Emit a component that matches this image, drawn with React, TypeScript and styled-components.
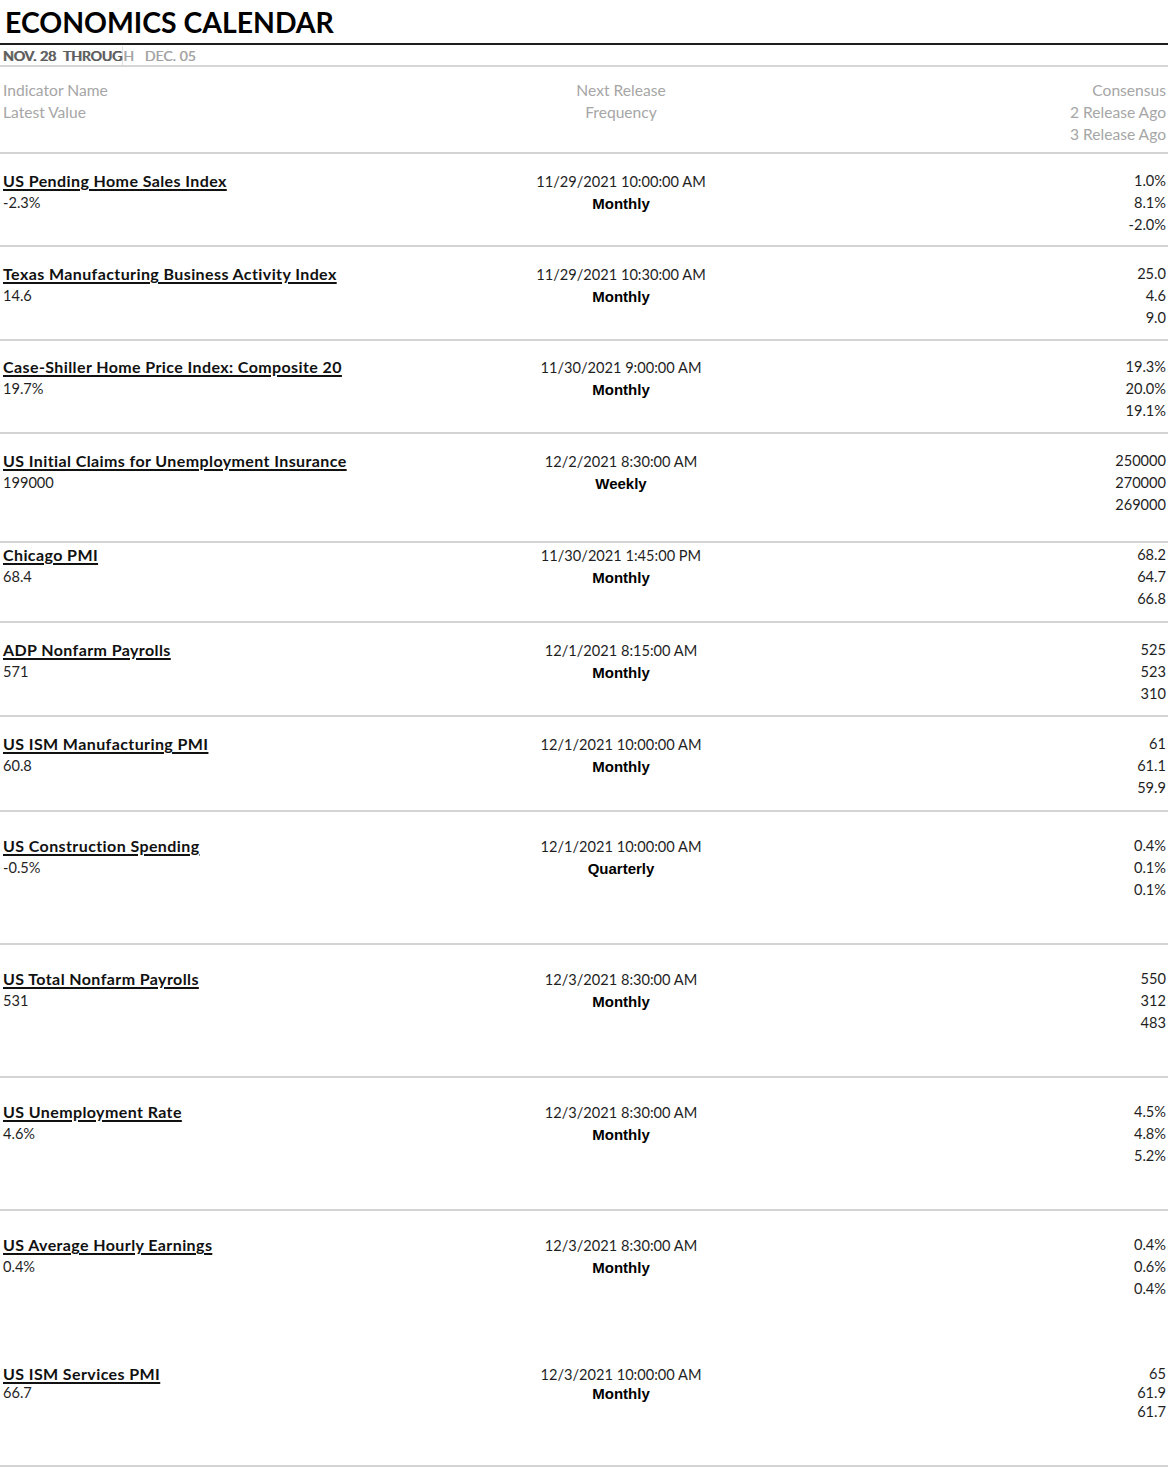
import * as React from 'react';
import styled, { createGlobalStyle } from 'styled-components';

const GlobalStyle = createGlobalStyle`
  html, body {
    margin: 0;
    padding: 0;
    background: #fff;
  }
  body {
    font-family: Lato, "Open Sans", sans-serif;
    color: #1a1a1a;
  }
`;

interface Release {
  name: string;
  latest: string;
  date: string;
  freq: string;
  values: string[];
  height: number;
  padTop: number;
  tight?: boolean;
  noRule?: boolean;
}

const releases: Release[] = [
  { name: 'US Pending Home Sales Index', latest: '-2.3%', date: '11/29/2021 10:00:00 AM', freq: 'Monthly', values: ['1.0%', '8.1%', '-2.0%'], height: 93, padTop: 16 },
  { name: 'Texas Manufacturing Business Activity Index', latest: '14.6', date: '11/29/2021 10:30:00 AM', freq: 'Monthly', values: ['25.0', '4.6', '9.0'], height: 94, padTop: 16 },
  { name: 'Case-Shiller Home Price Index: Composite 20', latest: '19.7%', date: '11/30/2021 9:00:00 AM', freq: 'Monthly', values: ['19.3%', '20.0%', '19.1%'], height: 93, padTop: 15 },
  { name: 'US Initial Claims for Unemployment Insurance', latest: '199000', date: '12/2/2021 8:30:00 AM', freq: 'Weekly', values: ['250000', '270000', '269000'], height: 109, padTop: 16 },
  { name: 'Chicago PMI', latest: '68.4', date: '11/30/2021 1:45:00 PM', freq: 'Monthly', values: ['68.2', '64.7', '66.8'], height: 80, padTop: 1 },
  { name: 'ADP Nonfarm Payrolls', latest: '571', date: '12/1/2021 8:15:00 AM', freq: 'Monthly', values: ['525', '523', '310'], height: 94, padTop: 16 },
  { name: 'US ISM Manufacturing PMI', latest: '60.8', date: '12/1/2021 10:00:00 AM', freq: 'Monthly', values: ['61', '61.1', '59.9'], height: 95, padTop: 16 },
  { name: 'US Construction Spending', latest: '-0.5%', date: '12/1/2021 10:00:00 AM', freq: 'Quarterly', values: ['0.4%', '0.1%', '0.1%'], height: 133, padTop: 23 },
  { name: 'US Total Nonfarm Payrolls', latest: '531', date: '12/3/2021 8:30:00 AM', freq: 'Monthly', values: ['550', '312', '483'], height: 133, padTop: 23 },
  { name: 'US Unemployment Rate', latest: '4.6%', date: '12/3/2021 8:30:00 AM', freq: 'Monthly', values: ['4.5%', '4.8%', '5.2%'], height: 133, padTop: 23 },
  { name: 'US Average Hourly Earnings', latest: '0.4%', date: '12/3/2021 8:30:00 AM', freq: 'Monthly', values: ['0.4%', '0.6%', '0.4%'], height: 131, padTop: 23, noRule: true },
  { name: 'US ISM Services PMI', latest: '66.7', date: '12/3/2021 10:00:00 AM', freq: 'Monthly', values: ['65', '61.9', '61.7'], height: 125, padTop: 22, tight: true },
];

const Page = styled.div`
  width: 1168px;
`;

const TitleBar = styled.div`
  height: 45px;
  box-sizing: border-box;
  border-bottom: 2px solid #1e1e1e;
  padding-left: 5px;
  display: flex;
  align-items: center;
`;

const Title = styled.h1`
  margin: 0;
  font-family: Lato, sans-serif;
  font-weight: 700;
  font-size: 28.4px;
  color: #000;
  line-height: 1;
  padding-top: 2px;
`;

const RangeBar = styled.div`
  height: 22px;
  box-sizing: border-box;
  border-bottom: 2px solid #d6d6d6;
  padding: 1px 0 0 3px;
  display: flex;
  align-items: center;
`;

const RangePart = styled.span<{ $dark?: boolean }>`
  display: flex;
  align-items: center;
  align-self: stretch;
  font-family: Lato, sans-serif;
  font-size: 14px;
  white-space: pre;
  color: ${p => (p.$dark ? '#5c5c5c' : '#a3a3a3')};
  text-shadow: ${p => (p.$dark ? '0.7px 0 0 #6a6a6a, -0.4px 0 0 #9a9a9a' : '0.4px 0 0 #b5b5b5')};
  border-right: ${p => (p.$dark ? '1px solid #e2e2e2' : 'none')};
`;

const Row = styled.div<{ $height: number; $padTop: number; $noRule?: boolean; $tight?: boolean }>`
  display: grid;
  grid-template-columns: 521px 200px 1fr;
  box-sizing: border-box;
  height: ${p => p.$height}px;
  padding-top: ${p => p.$padTop}px;
  border-bottom: 2px solid ${p => (p.$noRule ? 'transparent' : '#d4d4d4')};
  line-height: ${p => (p.$tight ? 19 : 22)}px;
  font-size: 14.6px;
`;

const LeftCell = styled.div`
  padding-left: 3px;
  display: flex;
  flex-direction: column;
  align-items: flex-start;
`;

const MidCell = styled.div<{ $shift?: boolean }>`
  display: flex;
  flex-direction: column;
  align-items: center;
  white-space: nowrap;
  padding-top: ${p => (p.$shift ? 1 : 0)}px;
`;

const RightCell = styled.div`
  padding-right: 2px;
  display: flex;
  flex-direction: column;
  align-items: flex-end;
`;

const Label = styled.span`
  color: #a6a6a6;
  font-size: 15.6px;
`;

const Name = styled.a`
  font-weight: 700;
  font-size: 16px;
  letter-spacing: 0.4px;
  color: #111;
  text-decoration: underline;
  text-decoration-thickness: 1.6px;
  text-underline-offset: 2px;
  white-space: nowrap;
`;

const Value = styled.span`
  color: #1f1f1f;
`;

const Freq = styled.span`
  font-family: "Liberation Sans", Arial, sans-serif;
  font-weight: 700;
  font-size: 15px;
  color: #000;
`;

export default function App() {
  return (
    <Page>
      <GlobalStyle />
      <TitleBar>
        <Title>ECONOMICS CALENDAR</Title>
      </TitleBar>
      <RangeBar>
        <RangePart $dark>NOV. 28  THROUG</RangePart>
        <RangePart>H   DEC. 05</RangePart>
      </RangeBar>
      <Row $height={87} $padTop={12}>
        <LeftCell>
          <Label>Indicator Name</Label>
          <Label>Latest Value</Label>
        </LeftCell>
        <MidCell>
          <Label>Next Release</Label>
          <Label>Frequency</Label>
        </MidCell>
        <RightCell>
          <Label>Consensus</Label>
          <Label>2 Release Ago</Label>
          <Label>3 Release Ago</Label>
        </RightCell>
      </Row>
      {releases.map(r => (
        <Row key={r.name} $height={r.height} $padTop={r.padTop} $noRule={r.noRule} $tight={r.tight}>
          <LeftCell>
            <Name>{r.name}</Name>
            <Value>{r.latest}</Value>
          </LeftCell>
          <MidCell $shift>
            <Value>{r.date}</Value>
            <Freq>{r.freq}</Freq>
          </MidCell>
          <RightCell>
            {r.values.map((v, i) => (
              <Value key={i}>{v}</Value>
            ))}
          </RightCell>
        </Row>
      ))}
    </Page>
  );
}
